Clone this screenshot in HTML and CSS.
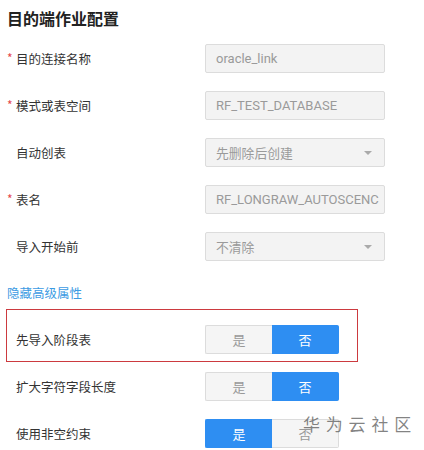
FILE: index.html
```html
<!DOCTYPE html>
<html lang="zh">
<head>
<meta charset="utf-8">
<link rel="stylesheet" href="styles.css">
</head>
<body>
<div class="page">
  <h2 class="title">目的端作业配置</h2>
  <div class="row">
    <div class="label"><span class="star">*</span>目的连接名称</div>
    <div class="field">oracle_link</div>
  </div>
  <div class="row">
    <div class="label"><span class="star">*</span>模式或表空间</div>
    <div class="field">RF_TEST_DATABASE</div>
  </div>
  <div class="row">
    <div class="label">自动创表</div>
    <div class="field select"><span class="cn">先删除后创建</span><span class="caret"></span></div>
  </div>
  <div class="row">
    <div class="label"><span class="star">*</span>表名</div>
    <div class="field">RF_LONGRAW_AUTOSCENC</div>
  </div>
  <div class="row">
    <div class="label">导入开始前</div>
    <div class="field select"><span class="cn">不清除</span><span class="caret"></span></div>
  </div>
  <div class="link">隐藏高级属性</div>
  <div class="highlight">
    <div class="row trow">
      <div class="label">先导入阶段表</div>
      <div class="toggle"><span class="opt">是</span><span class="opt on">否</span></div>
    </div>
  </div>
  <div class="row trow">
    <div class="label">扩大字符字段长度</div>
    <div class="toggle"><span class="opt">是</span><span class="opt on">否</span></div>
  </div>
  <div class="row trow last">
    <div class="label">使用非空约束</div>
    <div class="toggle"><span class="opt on">是</span><span class="opt">否</span></div>
  </div>
  <div class="watermark">华 为 云 社 区</div>
</div>
</body>
</html>
```
FILE: styles.css
```css
* { box-sizing: border-box; }
html, body { margin: 0; padding: 0; background: #fff; }
body {
  font-family: "Noto Sans CJK SC", "Noto Sans", sans-serif;
  color: #333;
  width: 424px;
  height: 450px;
  overflow: hidden;
}
.page {
  position: relative;
  padding: 8px 0 0 7px;
  height: 450px;
}
.title {
  margin: 0 0 16px 0;
  font-size: 16px;
  line-height: 20px;
  font-weight: bold;
  color: #222;
}
.row {
  display: grid;
  grid-template-columns: 198px 180px;
  align-items: center;
  height: 29px;
  margin-bottom: 18px;
}
.label {
  font-size: 12.5px;
  color: #333;
  padding-left: 9px;
  position: relative;
}
.star {
  position: absolute;
  left: 0;
  top: 0;
  color: #e5484d;
  font-size: 12px;
}
.field {
  height: 29px;
  background: #f3f3f3;
  border: 1px solid #dcdcdc;
  border-radius: 2px;
  padding-left: 10px;
  font-family: Roboto, "Noto Sans CJK SC", sans-serif;
  font-size: 13px;
  color: #9a9a9a;
  display: flex;
  align-items: center;
  white-space: nowrap;
  overflow: hidden;
}
.field .cn {
  font-family: "Noto Sans CJK SC", sans-serif;
  font-size: 12.8px;
}
.select { justify-content: space-between; padding-right: 12px; }
.caret {
  width: 0;
  height: 0;
  border-left: 4px solid transparent;
  border-right: 4px solid transparent;
  border-top: 4px solid #aaa;
}
.link {
  margin-top: 23px;
  font-size: 12.5px;
  line-height: 18px;
  color: #3c9be3;
}
.highlight {
  margin: 7px 0 10px -1px;
  width: 352px;
  border: 1px solid #cc3a3f;
  padding: 15px 0 7px 0;
}
.highlight .row { margin-bottom: 0; }
.trow { grid-template-columns: 198px 134px; }
.trow.last { margin-bottom: 0; }
.toggle {
  display: flex;
  height: 29px;
}
.opt {
  flex: 1;
  display: flex;
  align-items: center;
  justify-content: center;
  font-size: 13px;
  color: #999;
  background: #f5f5f5;
  border: 1px solid #dcdcdc;
}
.opt:first-child { border-radius: 2px 0 0 2px; border-right: none; }
.opt:last-child { border-radius: 0 2px 2px 0; border-left: none; }
.opt.on {
  background: #2e8ef2;
  border-color: #2e8ef2;
  color: #fff;
}
.watermark {
  position: absolute;
  left: 303px;
  top: 411px;
  font-size: 17px;
  letter-spacing: 1px;
  color: rgba(90, 90, 90, 0.75);
  white-space: nowrap;
}
```
